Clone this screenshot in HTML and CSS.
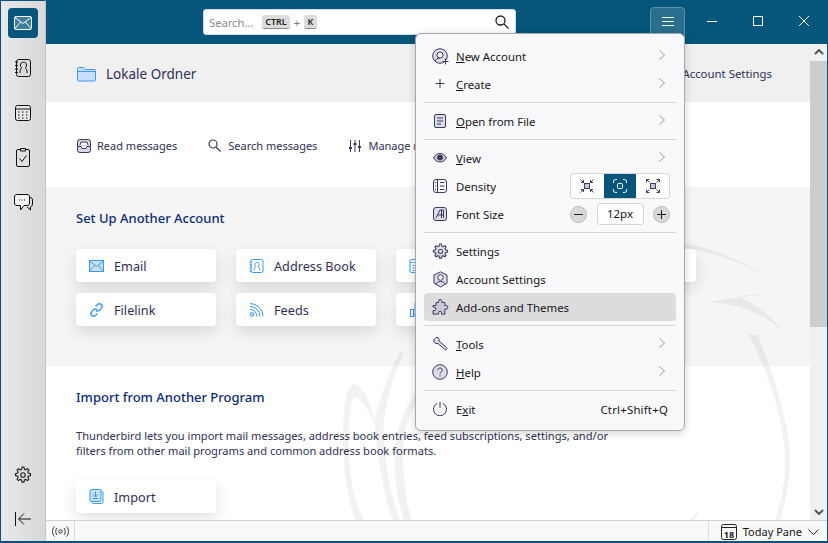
FILE: index.html
```html
<!DOCTYPE html>
<html lang="en">
<head>
<meta charset="utf-8">
<title>Thunderbird</title>
<link rel="stylesheet" href="styles.css">
</head>
<body>
<div class="window">
  <aside class="spaces">
    <div class="space-top">
      <button class="space active"><svg width="18" height="14" viewBox="0 0 18 14" fill="none" stroke="#fff"><rect x=".5" y=".5" width="17" height="13" rx="1.500" fill="#3f7f9c"/><path d="M1 1.500l8 6 8-6M1 12.500l5.500-6.500M17 12.500l-5.500-6.500" stroke="#fff"/></svg></button>
      <button class="space"><svg width="16" height="18" viewBox="0 0 16 18" fill="#dcdcdc" stroke="#111"><rect x="1.500" y=".5" width="14" height="17" rx="2"/><path d="M5 14v-2c0-1.800 1.500-2.300 1.500-3.200C5.700 8 5.500 7 5.500 6c0-1.800 1-2.800 3-2.800s3 1 3 2.800c0 1-.2 2-1 2.800 0 .9 1.500 1.400 1.500 3.200v2"/><path d="M0 3h3M0 6.500h3M0 10h3M0 13.500h3"/></svg></button>
      <button class="space"><svg width="16" height="16" viewBox="0 0 16 16" fill="none" stroke="#111"><rect x=".5" y=".5" width="15" height="15" rx="2" fill="#e8e8e8"/><path d="M1 4h14"/><path d="M3 7h2M7 7h2M11 7h2M3 10h2M7 10h2M11 10h2M3 13h2M7 13h2M11 13h2" stroke-dasharray="1.500 .5"/></svg></button>
      <button class="space"><svg width="14" height="19" viewBox="0 0 14 19" fill="#e0e0e0" stroke="#111"><rect x=".5" y="1.500" width="13" height="17" rx="1.500"/><path d="M4.500 .5h5v2.500h-5z"/><path d="M3.500 10.500l2.500 3 4.500-6" fill="none"/></svg></button>
      <button class="space"><svg width="19" height="18" viewBox="0 0 19 18" fill="none" stroke="#111"><path d="M15.500 3.500h.5c1.500 0 2.500 1 2.500 2.500v4c0 1.500-.8 2.500-2 2.800V16l-3.500-3"/><path d="M3 .5h10c1.500 0 2.500 1 2.500 2.500v6c0 1.500-1 2.500-2.500 2.500H10L6.500 16v-4.500H3C1.500 11.500.5 10.500.5 9V3C.5 1.500 1.500.5 3 .5z" fill="#f4f4f4"/><path d="M5 6h1M7.500 6h1M10 6h1"/></svg></button>
    </div>
    <div class="space-bottom">
      <button class="space"><svg width="18" height="18" viewBox="0 0 24 24" fill="#dcdcdc" stroke="#222" stroke-width="1.500"><path d="M10.800 1.500h2.400l.8 2.900 1.600.7 2.600-1.500 1.700 1.700-1.500 2.600.7 1.600 2.900.8v2.400l-2.900.8-.7 1.600 1.500 2.600-1.700 1.700-2.600-1.500-1.600.7-.8 2.900h-2.400l-.8-2.900-1.600-.7-2.600 1.500-1.700-1.700 1.500-2.600-.7-1.600-2.900-.8v-2.400l2.900-.8.7-1.600-1.500-2.600 1.700-1.700 2.600 1.500 1.600-.7z"/><circle cx="12" cy="12" r="3"/></svg></button>
      <button class="space"><svg width="17" height="14" viewBox="0 0 17 14" fill="none" stroke="#111"><path d="M.5 0v14M16 7H4M9 1.500L3.500 7 9 12.500"/></svg></button>
    </div>
  </aside>
  <div class="main">
    <header class="titlebar">
      <div class="search">
        <span class="search-hint">Search...</span>
        <kbd class="key">CTRL</kbd><span class="plus">+</span><kbd class="key key-k">K</kbd>
        <svg class="search-icon" width="14" height="14" viewBox="0 0 14 14" fill="none" stroke="#222" stroke-width="1.300"><circle cx="5.500" cy="5.500" r="4.500"/><path d="M9 9l4.500 4.500"/></svg>
      </div>
      <button class="hamburger"><svg width="12" height="10" viewBox="0 0 12 10" stroke="#fff"><path d="M0 .5h12M0 4.500h12M0 8.500h12"/></svg></button>
      <div class="winctl">
        <span class="ctl"><svg width="10" height="10" viewBox="0 0 10 10" stroke="#fff"><path d="M0 5.500h10"/></svg></span>
        <span class="ctl"><svg width="10" height="10" viewBox="0 0 10 10" fill="none" stroke="#fff"><rect x=".5" y=".5" width="9" height="9"/></svg></span>
        <span class="ctl"><svg width="10" height="10" viewBox="0 0 10 10" stroke="#fff"><path d="M0 0l10 10M10 0L0 10"/></svg></span>
      </div>
    </header>
    <div class="body-row">
      <main class="content">
        <section class="acct-head">
          <div class="acct-name"><svg width="19" height="15" viewBox="0 0 19 15" fill="#c6dffa" stroke="#3b98f5"><path d="M.5 12.500V2C.5 1 1 .5 2 .5h4.500l2 2H17c1 0 1.500.5 1.500 1.500v8.500c0 1-.5 1.500-1.500 1.500H2c-1 0-1.500-.5-1.500-1.500z"/><path d="M.5 4.500H18.500" fill="none"/></svg><span>Lokale Ordner</span></div>
          <span class="acct-settings">Account Settings</span>
        </section>
        <section class="actions">
          <a class="action"><svg width="14" height="14" viewBox="0 0 14 14" fill="#d8d8e4" stroke="#3a3a5e"><rect x=".5" y=".5" width="13" height="13" rx="2.500"/><path d="M.5 7.500h3.500l1 2h4l1-2h3.500" fill="#fff"/><path d="M3 6l1-3h6l1 3" fill="#fff"/></svg>Read messages</a>
          <a class="action"><svg width="14" height="13" viewBox="0 0 14 13" fill="none" stroke="#3a3a5e" stroke-width="1.200"><circle cx="5" cy="5" r="4"/><path d="M8 8l4.500 4.500"/></svg>Search messages</a>
          <a class="action"><svg width="12" height="12" viewBox="0 0 12 12" fill="none" stroke="#3a3a5e"><path d="M1.500 0v12M6 0v12M10.500 0v12"/><path d="M0 8h3M4.500 4h3M9 7h3" stroke-width="2"/></svg>Manage message filters</a>
        </section>
        <section class="setup">
          <h2>Set Up Another Account</h2>
          <div class="cards">
            <a class="card"><svg width="15" height="12" viewBox="0 0 15 12" fill="#c6dffa" stroke="#3b98f5"><rect x=".5" y=".5" width="14" height="11"/><path d="M.5 1l7 5.500 7-5.500M.5 11l5-5.500M14.500 11l-5-5.500" fill="none"/></svg>Email</a>
            <a class="card"><svg width="14" height="14" viewBox="0 0 14 14" fill="none" stroke="#3b98f5"><rect x="1.500" y=".5" width="12" height="13" rx="1.500"/><path d="M5 11V9.500c0-1 1-1.500 1.300-2C5.700 7 5.500 6 5.500 5.500c0-1.200.8-2 2-2s2 .8 2 2c0 .5-.2 1.500-.8 2 .3.500 1.300 1 1.300 2V11"/><path d="M0 3h2.500M0 6h2.500M0 9h2.500M0 12h2.500"/></svg>Address Book</a>
            <a class="card"><svg width="14" height="15" viewBox="0 0 14 15" fill="none" stroke="#3b98f5"><rect x=".5" y="1.500" width="13" height="13" rx="1.500"/><path d="M1 4.500h12M3 7.500h8M3 10h8M3 12.500h8" stroke-dasharray="2 1"/></svg>Calendar</a>
            <a class="card"><svg width="15" height="14" viewBox="0 0 15 14" fill="none" stroke="#3b98f5"><rect x=".5" y=".5" width="14" height="10" rx="2"/></svg>Chat</a>
            <a class="card"><svg width="14" height="14" viewBox="0 0 14 14" fill="none" stroke="#3b98f5" stroke-width="1.400"><path d="M6 3.500L8 1.500c1-1 3-1 3.800 0s1 2.800 0 3.800L10 7.200c-1 1-2.500 1-3.500.2"/><path d="M8 10.500L6 12.500c-1 1-3 1-3.800 0s-1-2.800 0-3.800L4 6.800c1-1 2.500-1 3.500-.2"/></svg>Filelink</a>
            <a class="card"><svg width="14" height="14" viewBox="0 0 14 14" fill="none" stroke="#3b98f5"><circle cx="2.500" cy="11.500" r="1.800" fill="#c6dffa"/><path d="M.5 6.500a7 7 0 0 1 7 7M.5 3.500a10 10 0 0 1 10 10M.5 .5a13 13 0 0 1 13 13"/></svg>Feeds</a>
            <a class="card"><svg width="13" height="14" viewBox="0 0 13 14" fill="none" stroke="#3b98f5"><rect x=".5" y="6.500" width="3" height="7"/><rect x="5" y=".5" width="3" height="13"/></svg>Newsgroups</a>
          </div>
        </section>
        <section class="import">
          <h2>Import from Another Program</h2>
          <p>Thunderbird lets you import mail messages, address book entries, feed subscriptions, settings, and/or<br>filters from other mail programs and common address book formats.</p>
          <a class="card"><svg width="14" height="15" viewBox="0 0 14 15" fill="#c6dffa" stroke="#3b98f5"><rect x="2.500" y="2.500" width="11" height="12" rx="1.500" fill="#fff"/><rect x=".5" y=".5" width="11" height="12" rx="1.500"/><path d="M6 2.500v5M3.500 5.500L6 8l2.500-2.500M3.500 9.500h5" fill="none"/></svg>Import</a>
        </section>
        <svg class="watermark" width="765" height="476" viewBox="46 44 765 476">
          <path d="M660 240C710 243 765 270 785 293L740 297L707 302C745 303 775 320 791 340L748 334C770 375 783 420 785 455C786 478 782 497 775 520L780 520C786 503 790 480 790 460C790 430 778 385 758 336L791 340C775 319 755 303 738 296L785 293C762 268 712 248 660 246Z"/>
          <path d="M355 520C345 490 341 450 344 410C346 394 349 384 354 384C362 384 370 402 375 420C380 395 390 370 401 350L404 354C392 378 382 410 384 440C386 470 392 500 400 520L392 520C384 495 377 455 375 425C368 408 358 394 353 398C349 408 347 440 350 470C352 490 358 508 364 520Z"/>
          <path d="M404 520C394 490 392 455 398 430C403 412 410 400 417 392L417 402C408 415 403 435 403 455C403 480 407 505 412 520Z"/>
          <path d="M690 520L697 512L698 514L694 520Z"/>
        </svg>
      </main>
      <div class="scrollbar">
        <svg width="10" height="6" viewBox="0 0 10 6" fill="none" stroke="#555" stroke-width="2"><path d="M1 5l4-4 4 4"/></svg>
        <div class="track"><div class="thumb"></div></div>
        <svg width="10" height="6" viewBox="0 0 10 6" fill="none" stroke="#555" stroke-width="2"><path d="M1 1l4 4 4-4"/></svg>
      </div>
    </div>
    <footer class="statusbar">
      <span class="status-net"><svg width="17" height="11" viewBox="0 0 17 11" fill="none" stroke="#333"><circle cx="8.500" cy="5.500" r="1.700"/><path d="M5 2c-1.700 2-1.700 5 0 7M12 2c1.700 2 1.700 5 0 7M2.500 .5c-2.700 3-2.700 7 0 10M14.500 .5c2.700 3 2.700 7 0 10"/></svg></span>
      <span class="today"><svg width="16" height="16" viewBox="0 0 16 16" fill="none" stroke="#222"><rect x=".5" y=".5" width="15" height="15" rx="2"/><path d="M1 3.500h14"/><text x="8" y="13.500" text-anchor="middle" class="cal-num">18</text></svg>Today Pane<svg class="today-chev" width="11" height="6" viewBox="0 0 11 6" fill="none" stroke="#222"><path d="M.5 .5l5 5 5-5"/></svg></span>
    </footer>
  </div>

  <nav class="menu">
    <div class="item"><svg class="mi" width="17" height="17" viewBox="0 0 17 17" fill="#dcdce8" stroke="#3a3a5e"><circle cx="8" cy="8" r="7.300"/><circle cx="8" cy="7" r="3" fill="#f9f9fb"/><path d="M3.500 13.500c0-2.500 2-3.500 4.500-3.500" fill="none"/><path d="M10.500 13.500h6M13.500 10.500v6"/></svg><span class="lbl"><u>N</u>ew Account</span><svg class="chev" width="6" height="10" viewBox="0 0 6 10" fill="none" stroke="#999"><path d="M.5 .5l5 4.500-5 4.500"/></svg></div>
    <div class="item"><svg class="mi" width="17" height="17" viewBox="0 0 17 17" stroke="#3a3a5e"><path d="M8 3v9M3.500 7.500h9"/></svg><span class="lbl"><u>C</u>reate</span><svg class="chev" width="6" height="10" viewBox="0 0 6 10" fill="none" stroke="#999"><path d="M.5 .5l5 4.500-5 4.500"/></svg></div>
    <hr class="sep">
    <div class="item"><svg class="mi" width="17" height="17" viewBox="0 0 17 17" fill="#dcdce8" stroke="#3a3a5e"><rect x="2.500" y="1.500" width="11" height="13" rx="1.500"/><path d="M5 5h6M5 8h6M5 11h4"/></svg><span class="lbl"><u>O</u>pen from File</span><svg class="chev" width="6" height="10" viewBox="0 0 6 10" fill="none" stroke="#999"><path d="M.5 .5l5 4.500-5 4.500"/></svg></div>
    <hr class="sep">
    <div class="item"><svg class="mi" width="17" height="17" viewBox="0 0 17 17" fill="#c8c8d8" stroke="#3a3a5e"><path d="M1.500 8C3 5 5.500 3.500 8 3.500S13 5 14.500 8C13 10.500 10.500 12 8 12S3 10.500 1.500 8z"/><circle cx="8" cy="7.500" r="2.500" fill="#3a3a5e"/></svg><span class="lbl"><u>V</u>iew</span><svg class="chev" width="6" height="10" viewBox="0 0 6 10" fill="none" stroke="#999"><path d="M.5 .5l5 4.500-5 4.500"/></svg></div>
    <div class="item"><svg class="mi" width="17" height="17" viewBox="0 0 17 17" fill="none" stroke="#3a3a5e"><rect x="1.500" y="1.500" width="13" height="13" rx="2.500"/><path d="M5.500 2v13M8 4.500h4.500M8 8h4.500M8 11.500h4.500M3 4.500h1M3 8h1M3 11.500h1"/></svg><span class="lbl">Density</span>
      <div class="density">
        <span class="dbtn"><svg width="14" height="14" viewBox="0 0 14 14" fill="none" stroke="#3a3a6e"><rect x="4.500" y="4.500" width="5" height="5" fill="#c8c8d8"/><path d="M.5 .5l3 3M13.500 .5l-3 3M.5 13.500l3-3M13.500 13.500l-3-3M3.500 1v2.500H1M10.500 1v2.500H13M3.500 13v-2.500H1M10.500 13v-2.500H13"/></svg></span>
        <span class="dbtn on"><svg width="14" height="14" viewBox="0 0 14 14" fill="none" stroke="#fff"><rect x="4.500" y="4.500" width="5" height="5" rx="1"/><path d="M.5 4V2.500a2 2 0 0 1 2-2H4M10 .5h1.500a2 2 0 0 1 2 2V4M13.500 10v1.500a2 2 0 0 1-2 2H10M4 13.500H2.500a2 2 0 0 1-2-2V10"/></svg></span>
        <span class="dbtn"><svg width="14" height="14" viewBox="0 0 14 14" fill="none" stroke="#3a3a6e"><rect x="4.500" y="4.500" width="5" height="5" fill="#c8c8d8"/><path d="M3.500 3.500L.5 .5M10.500 3.500l3-3M3.500 10.500l-3 3M10.500 10.500l3 3M.5 3.500v-3h3M10.500 .5h3v3M.5 10.500v3h3M13.500 10.500v3h-3"/></svg></span>
      </div>
    </div>
    <div class="item"><svg class="mi" width="17" height="17" viewBox="0 0 17 17" fill="#dcdce8" stroke="#3a3a5e"><rect x="1.500" y="1.500" width="13" height="13" rx="2.500"/><path d="M4 12L8 4h3.500v8M6 9h5M9.500 4v8" fill="none"/></svg><span class="lbl">Font Size</span>
      <div class="fontsize">
        <span class="round"><svg width="9" height="9" viewBox="0 0 9 9" stroke="#222"><path d="M0 4.500h9"/></svg></span>
        <span class="fs-val">12px</span>
        <span class="round"><svg width="9" height="9" viewBox="0 0 9 9" stroke="#222"><path d="M0 4.500h9M4.500 0v9"/></svg></span>
      </div>
    </div>
    <hr class="sep">
    <div class="item"><svg class="mi" width="17" height="17" viewBox="0 0 24 24" fill="#dcdce8" stroke="#3a3a5e" stroke-width="1.500"><path d="M10.800 1.500h2.400l.8 2.900 1.600.7 2.600-1.500 1.700 1.700-1.500 2.600.7 1.600 2.900.8v2.400l-2.900.8-.7 1.600 1.500 2.600-1.700 1.700-2.600-1.500-1.600.7-.8 2.900h-2.400l-.8-2.900-1.600-.7-2.600 1.500-1.700-1.700 1.500-2.600-.7-1.600-2.900-.8v-2.400l2.900-.8.7-1.600-1.500-2.600 1.700-1.700 2.600 1.500 1.600-.7z"/><circle cx="12" cy="12" r="2.800" fill="#f9f9fb"/></svg><span class="lbl">Settings</span></div>
    <div class="item"><svg class="mi" width="17" height="17" viewBox="0 0 17 17" fill="#dcdce8" stroke="#3a3a5e"><path d="M8.500 .8l6.500 3.200v8l-6.500 4-6.500-4V4z"/><circle cx="8.500" cy="6.500" r="2.800" fill="#f9f9fb"/><path d="M4 14c0-2.500 2-3.500 4.500-3.500S13 11.500 13 14" fill="none"/></svg><span class="lbl">Account Settings</span></div>
    <div class="item hot"><svg class="mi" width="17" height="17" viewBox="0 0 17 17" fill="#c8c8d8" stroke="#3a3a5e"><path d="M4 3.500h2.500V2.300a1.700 1.700 0 0 1 3.400 0v1.200h3v3h1.200a1.800 1.800 0 0 1 0 3.600h-1.200v5H9.500v-1.300a1.500 1.500 0 0 0-3 0v1.300H1v-3.500h1.200a1.700 1.700 0 0 0 0-3.400H1V6.500h3z"/></svg><span class="lbl">Add-ons and Themes</span></div>
    <hr class="sep">
    <div class="item"><svg class="mi" width="17" height="17" viewBox="0 0 17 17" fill="#dcdce8" stroke="#3a3a5e"><path d="M2 3.500l2-2h2l1 1.500v2l7.500 6.500c1.200 1.200-.3 3-1.500 2L6 7.500H4L2 6z"/></svg><span class="lbl"><u>T</u>ools</span><svg class="chev" width="6" height="10" viewBox="0 0 6 10" fill="none" stroke="#999"><path d="M.5 .5l5 4.500-5 4.500"/></svg></div>
    <div class="item"><svg class="mi" width="17" height="17" viewBox="0 0 17 17" fill="#dcdce8" stroke="#3a3a5e"><circle cx="8" cy="8" r="7.300"/><path d="M5.800 6.200C5.800 4.800 6.800 4 8 4s2.300.8 2.300 2.100C10.300 7.800 8 8 8 9.800M8 11.200v1.300" fill="none"/></svg><span class="lbl"><u>H</u>elp</span><svg class="chev" width="6" height="10" viewBox="0 0 6 10" fill="none" stroke="#999"><path d="M.5 .5l5 4.500-5 4.500"/></svg></div>
    <hr class="sep">
    <div class="item"><svg class="mi" width="17" height="17" viewBox="0 0 17 17" fill="none" stroke="#3a3a5e"><path d="M5 2.500a6.500 6.500 0 1 0 6 0M8 1v6"/></svg><span class="lbl">E<u>x</u>it</span><span class="shortcut">Ctrl+Shift+Q</span></div>
  </nav>
</div>
</body>
</html>
```
FILE: styles.css
```css
* { box-sizing: border-box; }
html, body { margin: 0; height: 100%; overflow: hidden; }
body { font-family: "Noto Sans", "Open Sans", sans-serif; font-size: 11px; color: #2f2f55; }
button { border: 0; background: none; padding: 0; font: inherit; display: flex; align-items: center; justify-content: center; }
svg { display: block; flex: none; }
.window { position: relative; width: 828px; height: 543px; display: flex; border: 1px solid #05567a; border-top: 0; border-bottom-width: 2px; overflow: hidden; }

.spaces { width: 45px; flex: none; display: flex; flex-direction: column; justify-content: space-between; background: linear-gradient(90deg, #e8e8e8, #d8d8d8); border-right: 1px solid #c4c4c4; padding: 7px 7px 7px; border-top: 1px solid #05567a; }
.space-top { display: flex; flex-direction: column; gap: 15px; }
.space-top .space:nth-child(4) { margin-top: -1px; }
.space-top .space:nth-child(5) { margin-top: 1px; }
.space { width: 30px; height: 30px; }
.active { background: #05567a; border-radius: 4px; }
.space-bottom { display: flex; flex-direction: column; gap: 14px; }

.main { flex: 1; min-width: 0; display: flex; flex-direction: column; }
.titlebar { height: 44px; flex: none; background: #05567a; display: flex; align-items: flex-start; padding: 9px 0 0 157px; }
.search { width: 313px; height: 26px; background: #fff; border-radius: 3px; display: flex; align-items: center; padding: 0 6px 0 5px; border: 1px solid #d5dbe0; }
.search-hint { font-size: 11.200px; width: 53px; color: #8b8b92; }
.key { font: 600 9px "Noto Sans", sans-serif; color: #222; background: #dcdcdc; border-radius: 3px; border-bottom: 1px solid #888; height: 14px; padding: 0 2px; line-height: 13px; width: 28px; text-align: center; }
.plus { width: 14px; text-align: center; color: #777; }
.key-k { width: 13px; padding: 0; }
.search-icon { margin-left: auto; }
.hamburger { width: 35px; height: 37px; margin-left: 134px; margin-top: -2px; background: #2a6e8f; border: 1px solid #5b92ab; border-radius: 4px; align-items: flex-start; padding-top: 9px; }
.winctl { display: flex; margin-left: 4px; margin-top: -9px; }
.ctl { width: 46px; height: 42px; display: flex; align-items: center; justify-content: center; }

.body-row { flex: 1; min-height: 0; display: flex; }
.content { position: relative; flex: 1; min-width: 0; overflow: hidden; background: #fff; }
.watermark { position: absolute; left: 0; top: 0; fill: rgba(0, 0, 0, .05); pointer-events: none; }
.acct-head { height: 58px; background: #f0f0f0; display: flex; align-items: center; justify-content: space-between; padding: 2px 38px 0 31px; }
.acct-name { display: flex; align-items: center; gap: 10px; font-size: 13.500px; color: #2f2f55; }
.acct-settings { font-size: 11.400px; margin-top: -2px; }
.actions { height: 85px; display: flex; align-items: center; padding: 2px 0 0 31px; }
.action { display: flex; align-items: center; gap: 6px; margin-right: 31px; white-space: nowrap; }
.action:nth-child(3) { margin-left: 1px; gap: 7px; }
.setup { height: 179px; background: #f5f5f5; padding: 21px 30px 0; }
h2 { margin: 0; font-size: 13px; font-weight: 500; line-height: 20px; color: #0b2a78; }
.cards { display: grid; grid-template-columns: repeat(4, 140px); grid-auto-rows: 33px; gap: 11px 20px; margin-top: 21px; }
.card { display: flex; align-items: center; gap: 10px; height: 33px; padding-left: 13px; background: #fff; border-radius: 4px; box-shadow: 0 6px 16px rgba(0,0,0,.12); font-size: 12.700px; }
.card svg { width: 15px; }
.cards .card:nth-child(5) { grid-column: 1; }
.import { padding: 21px 30px 0; }
.import p { margin: 21px 0 0; font-size: 11.100px; line-height: 15px; height: 30px; }
.import .card { width: 140px; margin-top: 22px; }

.scrollbar { width: 17px; flex: none; background: #f0f0f0; display: flex; flex-direction: column; align-items: center; padding: 5px 0; }
.track { flex: 1; width: 100%; padding-top: 6px; }
.thumb { height: 266px; background: #cdcdcd; }

.statusbar { height: 21px; flex: none; background: #f9f9f9; border-top: 1px solid #d0d0d0; display: flex; align-items: center; justify-content: space-between; color: #15141a; }
.status-net { width: 29px; height: 100%; display: flex; align-items: center; justify-content: center; border-right: 1px solid #dcdcdc; }
.today { height: 100%; display: flex; align-items: center; gap: 6px; padding: 1px 8px 0 12px; border-left: 1px solid #dcdcdc; }
.cal-num { font: 700 9px "Noto Sans", sans-serif; fill: #222; stroke: none; }

.menu { position: absolute; left: 414px; top: 33px; width: 270px; height: 398px; padding: 8px; background: #f9f9fb; border: 1px solid #a8a8ac; border-radius: 6px; box-shadow: 0 2px 8px rgba(0,0,0,.18); }
.item { height: 28px; display: flex; align-items: center; padding-left: 8px; border-radius: 4px; color: #15141a; font-size: 11.400px; }
.mi { margin-right: 7px; }
.lbl { flex: 1; }
.chev { margin: -3px 11px 0 0; }
.hot { background: #dcdcdc; }
.sep { height: 1px; border: 0; margin: 4px 0; background: #d6d6d6; }
.shortcut { margin-right: 8px; letter-spacing: .2px; }
.density { display: flex; width: 100px; height: 26px; margin-right: 6px; border: 1px solid #d6d6d6; border-radius: 3px; background: #fff; }
.dbtn { flex: 1; display: flex; align-items: center; justify-content: center; }
.on { background: #05567a; }
.fontsize { display: flex; align-items: center; justify-content: space-between; width: 100px; margin-right: 6px; }
.round { width: 17px; height: 17px; border-radius: 50%; background: #d9d9dc; border: 1px solid #bbb; display: flex; align-items: center; justify-content: center; }
.fs-val { width: 47px; height: 22px; line-height: 20px; text-align: center; background: #fff; border: 1px solid #d6d6d6; border-radius: 3px; font-size: 11.500px; }
```
